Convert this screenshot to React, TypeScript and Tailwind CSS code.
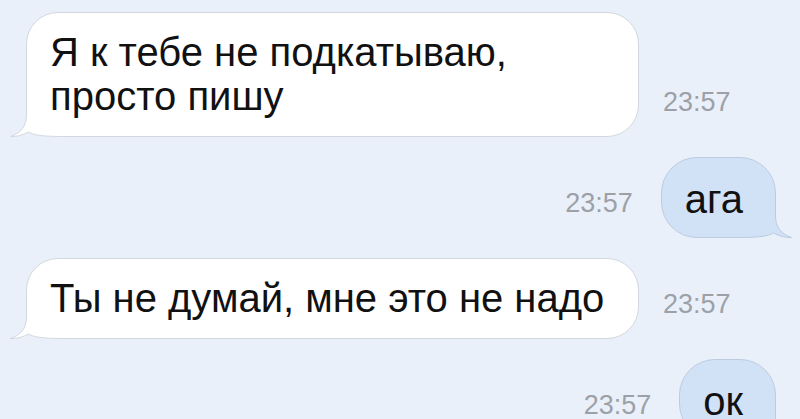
import React from 'react';

const font = { fontFamily: '"Liberation Sans", Arial, Helvetica, sans-serif' };

function Tail({ side, fill, stroke }: { side: 'left' | 'right'; fill: string; stroke: string }) {
  const pos =
    side === 'left'
      ? 'absolute left-[-17px] bottom-[-1px]'
      : 'absolute right-[-17px] bottom-[-1px] -scale-x-100';
  return (
    <svg className={pos} width="56" height="42" viewBox="0 0 56 42">
      <path
        d="M16.5 0 V20 C16.5 31 11 38 0.5 41.5 C7 41.8 13 40 18.5 37 C25 40.5 33 41.5 52 41.5 H56 V34 Q24 36 24 0 Z"
        fill={fill}
      />
      <path
        d="M16.5 0 V20 C16.5 31 11 38 0.5 41.5 C7 41.8 13 40 18.5 37 C25 40.5 33 41.5 56 41.5"
        fill="none"
        stroke={stroke}
        strokeWidth="1"
      />
    </svg>
  );
}

function Time() {
  return <span className="text-[27px] leading-[27px] text-[#9ca1a8] mb-[21px]">23:57</span>;
}

function Incoming({ children }: { children: React.ReactNode }) {
  return (
    <div className="flex items-end pl-[26px] gap-[24px]">
      <div className="relative w-[613px] bg-white border border-[#d3d7de] rounded-[32px] pl-[23px] pr-[16px] pt-[17px] pb-[18px] text-[40px] leading-[44px] text-[#111]">
        {children}
        <Tail side="left" fill="#ffffff" stroke="#d3d7de" />
      </div>
      <Time />
    </div>
  );
}

function Outgoing({ children }: { children: React.ReactNode }) {
  return (
    <div className="flex items-end justify-end pr-[24px] gap-[28px]">
      <Time />
      <div className="relative bg-[#d1e2f7] border border-[#bccbe0] rounded-[36px] pl-[23px] pr-[32px] pt-[19px] pb-[16px] text-[40px] leading-[44px] text-[#111]">
        {children}
        <Tail side="right" fill="#d1e2f7" stroke="#bccbe0" />
      </div>
    </div>
  );
}

export default function App() {
  return (
    <div className="w-[800px] h-[419px] overflow-hidden bg-[#eaf0f9] flex flex-col gap-[20px] pt-[12px]" style={font}>
      <Incoming>
        Я к тебе не подкатываю,
        <br />
        просто пишу
      </Incoming>
      <Outgoing>ага</Outgoing>
      <Incoming>Ты не думай, мне это не надо</Incoming>
      <Outgoing>ок</Outgoing>
    </div>
  );
}
